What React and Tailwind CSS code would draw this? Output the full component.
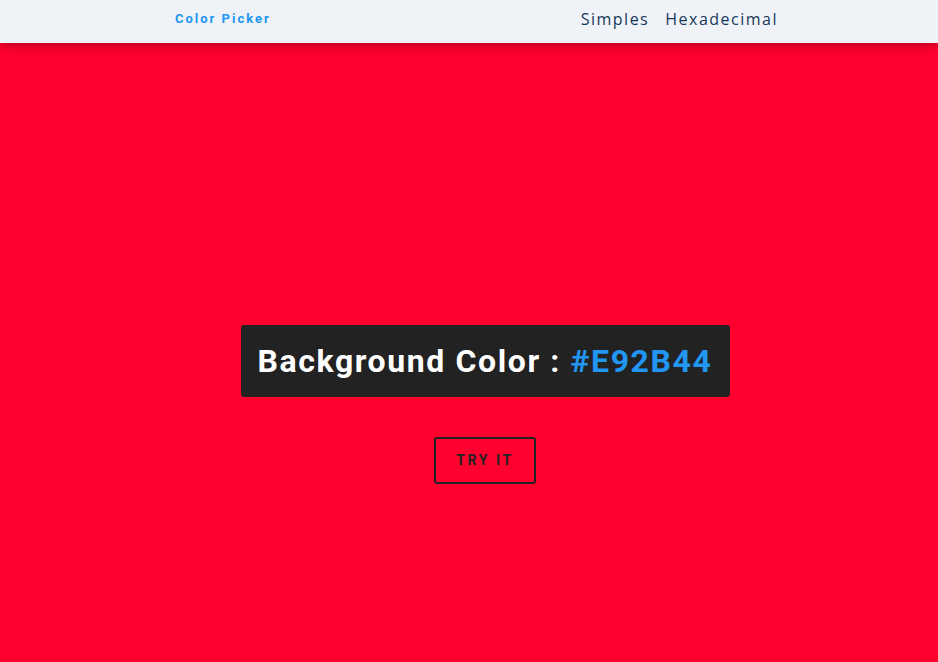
export default function App() {
  return (
    <div className="min-h-screen h-[662px] flex flex-col bg-[#ff002f] overflow-hidden">
      {/* Header */}
      <header className="relative z-10 h-[43px] shrink-0 bg-[#eff3f8] shadow-[0_2px_10px_rgba(0,0,0,0.3)] flex items-center justify-between pl-[175px] pr-[160px]">
        <span className="font-['Roboto'] font-bold text-[13px] tracking-[2px] text-[#2196f3] -mt-[6px]">
          Color Picker
        </span>
        <nav className="flex gap-[16px] font-['Open_Sans'] text-[16px] tracking-[1.5px] text-[#15375a] -mt-[5px]">
          <a>Simples</a>
          <a>Hexadecimal</a>
        </nav>
      </header>

      {/* Main */}
      <main className="flex-1 flex flex-col items-center justify-center pl-[32px] pt-[104px]">
        <div className="bg-[#222222] rounded-[3px] px-[17px] h-[72px] flex items-center">
          <h1 className="font-['Roboto'] font-bold text-[32px] tracking-[1.6px] text-white">
            Background Color : <span className="text-[#2196f3]">#E92B44</span>
          </h1>
        </div>
        <button className="mt-[40px] w-[102px] h-[47px] border-2 border-[#222222] rounded-[3px] font-['Roboto'] font-bold text-[14px] tracking-[2.6px] text-[#222222]">
          TRY IT
        </button>
      </main>
    </div>
  )
}
